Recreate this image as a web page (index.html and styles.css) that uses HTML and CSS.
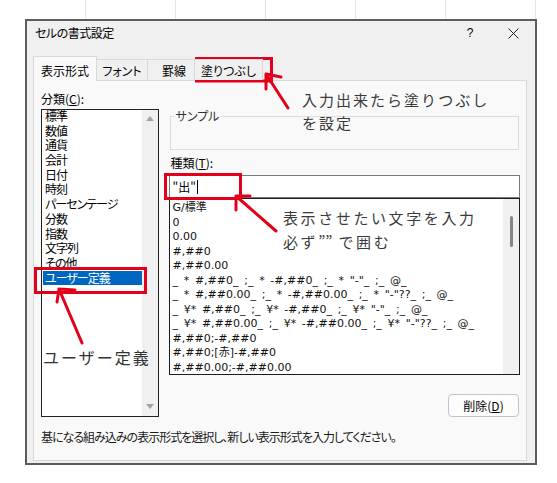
FILE: index.html
```html
<!DOCTYPE html>
<html lang="ja">
<head>
<meta charset="utf-8">
<title>セルの書式設定</title>
<link rel="stylesheet" href="styles.css">
</head>
<body>
<div class="sheet"></div>
<div class="dialog">
  <div class="titlebar">
    <span class="title">セルの書式設定</span>
    <span class="help">?</span>
    <span class="close"><svg width="11" height="11" viewBox="0 0 11 11"><path d="M0.5 0.5L10.5 10.5M10.5 0.5L0.5 10.5" stroke="#222" stroke-width="1" fill="none"/></svg></span>
  </div>
  <div class="tabs">
    <div class="tab active t1">表示形式</div>
    <div class="tab t2">フォント</div>
    <div class="tab t3">罫線</div>
    <div class="tab t4">塗りつぶし</div>
  </div>
  <div class="panel">
    <div class="cols">
      <div class="left">
        <div class="label">分類(<u>C</u>):</div>
        <div class="catlist">
          <ul class="items">
            <li>標準</li>
            <li>数値</li>
            <li>通貨</li>
            <li>会計</li>
            <li>日付</li>
            <li>時刻</li>
            <li>パーセンテージ</li>
            <li>分数</li>
            <li>指数</li>
            <li>文字列</li>
            <li>その他</li>
            <li class="sel">ユーザー定義</li>
          </ul>
          <div class="vscroll arrows"><span class="up"></span><span class="down"></span></div>
        </div>
      </div>
      <div class="right">
        <fieldset class="sample"><legend>サンプル</legend></fieldset>
        <div class="label label2">種類(<u>T</u>):</div>
        <div class="input">"出"<span class="caret"></span></div>
        <div class="fmtlist">
          <ul class="items">
            <li>G/標準</li>
            <li>0</li>
            <li>0.00</li>
            <li>#,##0</li>
            <li>#,##0.00</li>
            <li>_ * #,##0_ ;_ * -#,##0_ ;_ * "-"_ ;_ @_</li>
            <li>_ * #,##0.00_ ;_ * -#,##0.00_ ;_ * "-"??_ ;_ @_</li>
            <li>_ ¥* #,##0_ ;_ ¥* -#,##0_ ;_ ¥* "-"_ ;_ @_</li>
            <li>_ ¥* #,##0.00_ ;_ ¥* -#,##0.00_ ;_ ¥* "-"??_ ;_ @_</li>
            <li>#,##0;-#,##0</li>
            <li>#,##0;[赤]-#,##0</li>
            <li>#,##0.00;-#,##0.00</li>
          </ul>
          <div class="vscroll"><span class="thumb"></span></div>
        </div>
        <div class="btnrow"><button class="btn">削除(<u>D</u>)</button></div>
      </div>
    </div>
    <div class="hint">基になる組み込みの表示形式を選択し、新しい表示形式を入力してください。</div>
  </div>
</div>

<svg class="overlay" width="557" height="483" viewBox="0 0 557 483">
  <g fill="none" stroke="#e3001b" stroke-width="3">
    <rect x="196.5" y="58.5" width="75" height="22.5"/>
    <rect x="35.5" y="268.5" width="110" height="24"/>
    <rect x="165.5" y="174.5" width="75" height="24"/>
  </g>
  <g fill="none" stroke="#e3001b" stroke-width="3" stroke-linecap="round" stroke-linejoin="round">
    <path d="M288 108L266 74M281 77L266 74L266 89"/>
    <path d="M276 231L236 196M250 196L236 196L236 210"/>
    <path d="M82 343L59 289M75 290L59 289L57 302"/>
  </g>
</svg>
<div class="note n1">入力出来たら塗りつぶし<br>を設定</div>
<div class="note n2">表示させたい文字を入力<br>必ず<span class="q">””</span> で囲む</div>
<div class="note n3">ユーザー定義</div>
</body>
</html>
```

FILE: styles.css
```css
* { box-sizing: border-box; }

body {
  margin: 0;
  width: 557px;
  height: 483px;
  overflow: hidden;
  position: relative;
  background: #fff;
  font-family: "Noto Sans CJK JP", "Noto Sans", sans-serif;
  font-size: 12px;
  color: #000;
  font-feature-settings: "palt";
}

.sheet {
  height: 19px;
  background: repeating-linear-gradient(to right, transparent 0 85px, #e4e4e4 85px 86px, transparent 86px 90px);
}

.dialog {
  margin-left: 25px;
  width: 512px;
  height: 446px;
  border: 2px solid #5e5b59;
  background: #f0f0f0;
  display: flex;
  flex-direction: column;
}

.titlebar {
  height: 35px;
  display: flex;
  align-items: flex-start;
  padding: 4px 0 0 8px;
  line-height: 16px;
}
.title { flex: 1; letter-spacing: -0.5px; }
.help { width: 36px; text-align: center; font-family: "Liberation Sans", sans-serif; font-size: 12px; }
.close { width: 34px; margin-left: 8px; margin-right: 5px; display: flex; justify-content: center; padding-top: 3px; }

.tabs {
  height: 24px;
  display: flex;
  align-items: flex-end;
  padding-left: 6px;
  position: relative;
  z-index: 1;
}
.tab {
  height: 21px;
  border: 1px solid #d9d9d9;
  border-left: none;
  border-bottom: none;
  background: #f0f0f0;
  display: flex;
  align-items: center;
  justify-content: center;
  line-height: 16px;
  padding-top: 1px;
}
.tab.active {
  height: 25px;
  margin-bottom: -1px;
  background: #f9f9f9;
  border-left: 1px solid #d9d9d9;
  padding-top: 3px;
}
.t1 { width: 64px; }
.t2 { width: 51px; }
.t3 { width: 47px; padding-left: 6px; }
.t4 { width: 68px; }

.panel {
  margin-left: 6px;
  width: 494px;
  height: 381px;
  background: #f9f9f9;
  border: 1px solid #d9d9d9;
  padding: 0 6px 0 7px;
}

.cols { display: flex; gap: 10px; }

.left { width: 118px; padding-top: 10px; }
.label { line-height: 16px; }

.items { margin: 0; padding: 0; list-style: none; flex: 1; }

.catlist {
  margin-top: 2px;
  height: 308px;
  border: 1px solid #222;
  background: #fff;
  display: flex;
}
.catlist .items { margin-top: -1px; }
.catlist li { line-height: 14.7px; height: 14.7px; margin-left: 1px; padding-left: 2px; white-space: nowrap; letter-spacing: -1px; }
.catlist li.sel { background: #0067c0; color: #fff; }

.vscroll {
  width: 16px;
  background: #f0f0f0;
  display: flex;
  flex-direction: column;
  align-items: center;
}
.arrows { justify-content: space-between; padding: 6px 0 7px; }
.up, .down { width: 0; height: 0; border-left: 4px solid transparent; border-right: 4px solid transparent; }
.up { border-bottom: 5px solid #a3a3a3; }
.down { border-top: 5px solid #a3a3a3; }

.right { width: 353px; padding-top: 27px; display: flex; flex-direction: column; }

.sample {
  margin: 0 1px;
  padding: 0;
  min-width: 0;
  height: 42px;
  border: 1px solid #dcdcdc;
}
.sample legend {
  margin-left: 4px;
  padding: 0 1px;
  line-height: 16px;
  color: #333;
}

.label2 { margin: 5px 0 0 2px; }

.input {
  margin-top: 4px;
  height: 23px;
  border: 1px solid #7a7a7a;
  background: #fff;
  padding-left: 3px;
  display: flex;
  align-items: center;
  line-height: 16px;
}
.caret { display: inline-block; width: 1px; height: 14px; background: #000; margin-left: 1px; }

.fmtlist {
  height: 177px;
  border: 1px solid #1e1e1e;
  background: #fff;
  display: flex;
}
.fmtlist .items {
  padding: 2px 0 0 3px;
  overflow: hidden;
  font-family: "DejaVu Sans", "Noto Sans CJK JP", sans-serif;
  font-size: 11px;
  font-feature-settings: normal;
  word-spacing: 2.2px;
  color: #111;
}
.fmtlist li { line-height: 14.5px; height: 14.5px; white-space: pre; }
.thumb { width: 3px; height: 31px; margin-top: 17px; border-radius: 2px; background: #858585; }

.btnrow { margin-top: 19px; display: flex; justify-content: flex-end; padding-right: 1px; }
.btn {
  width: 71px;
  height: 23px;
  padding: 0;
  border: 1px solid #c4c4c4;
  border-radius: 4px;
  background: #fdfdfd;
  font: inherit;
  line-height: 16px;
  color: #000;
}

.hint { margin-top: 12px; line-height: 16px; color: #1a1a1a; letter-spacing: -1px; }

.overlay { position: absolute; left: 0; top: 0; pointer-events: none; }

.note {
  position: absolute;
  font-family: "Noto Sans CJK JP", sans-serif;
  font-feature-settings: normal;
  font-size: 15px;
  letter-spacing: 2px;
  color: #3a3a3a;
  white-space: nowrap;
}
.n1 { left: 302px; top: 88px; line-height: 23px; }
.n2 { left: 283px; top: 206px; line-height: 24px; letter-spacing: 2.6px; }
.n2 .q { letter-spacing: 0; font-feature-settings: "palt"; }
.n3 { left: 43px; top: 345px; line-height: 24px; font-size: 16px; letter-spacing: 2px; color: #333; }
```
